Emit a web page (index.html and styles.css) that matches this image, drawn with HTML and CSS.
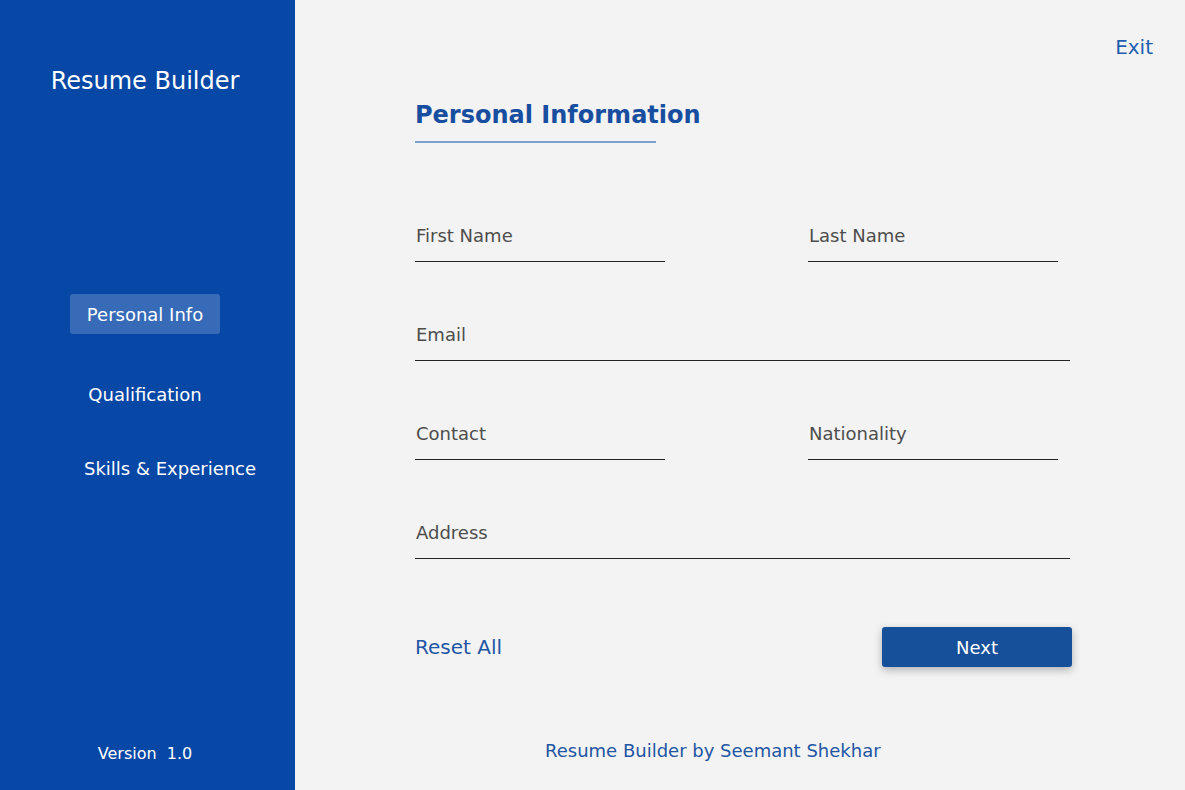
FILE: index.html
```html
<!DOCTYPE html>
<html lang="en">
<head>
<meta charset="utf-8">
<title>Resume Builder</title>
<link rel="stylesheet" href="styles.css">
</head>
<body>
<div class="app">
  <aside class="sidebar">
    <div class="brand">Resume Builder</div>
    <nav class="nav">
      <a class="nav-item nav-item--active">Personal Info</a>
      <a class="nav-item">Qualification</a>
      <a class="nav-item nav-item--wide">Skills &amp; Experience</a>
    </nav>
    <div class="version">Version&nbsp; 1.0</div>
  </aside>
  <main class="main">
    <div class="topbar"><a class="exit">Exit</a></div>
    <section class="content">
      <h1 class="heading">Personal Information</h1>
      <div class="heading-rule"></div>
      <form class="form">
        <div class="row">
          <input class="field" type="text" placeholder="First Name">
          <input class="field" type="text" placeholder="Last Name">
        </div>
        <div class="row">
          <input class="field field--full" type="text" placeholder="Email">
        </div>
        <div class="row">
          <input class="field" type="text" placeholder="Contact">
          <input class="field" type="text" placeholder="Nationality">
        </div>
        <div class="row">
          <input class="field field--full" type="text" placeholder="Address">
        </div>
        <div class="actions">
          <button type="button" class="reset">Reset All</button>
          <button type="button" class="next">Next</button>
        </div>
      </form>
    </section>
    <footer class="footer">Resume Builder by Seemant Shekhar</footer>
  </main>
</div>
</body>
</html>
```

FILE: styles.css
```css
* { box-sizing: border-box; }

html, body {
  margin: 0;
  padding: 0;
  height: 100%;
}

body {
  font-family: "DejaVu Sans", "Liberation Sans", sans-serif;
  background: #f3f3f3;
}

.app {
  display: flex;
  width: 1185px;
  height: 790px;
}

.sidebar {
  width: 295px;
  flex: none;
  background: #0747a6;
  color: #ffffff;
  display: flex;
  flex-direction: column;
}

.brand {
  margin-top: 67px;
  font-size: 24px;
  line-height: 28px;
  text-align: center;
  padding-right: 5px;
}

.nav {
  margin-top: 199px;
  display: flex;
  flex-direction: column;
  gap: 40px;
}

.nav-item {
  display: block;
  margin-left: 70px;
  width: 150px;
  height: 40px;
  line-height: 41px;
  font-size: 18px;
  text-align: center;
  border-radius: 3px;
  color: #ffffff;
  cursor: pointer;
}

.nav-item--active {
  background: rgba(255, 255, 255, 0.2);
}

.nav-item--wide {
  margin-top: -6px;
  margin-left: 84px;
  width: auto;
  text-align: left;
}

.version {
  margin-top: auto;
  padding-bottom: 26px;
  font-size: 16px;
  line-height: 20px;
  text-align: center;
  padding-right: 5px;
}

.main {
  flex: 1;
  display: flex;
  flex-direction: column;
}

.topbar {
  display: flex;
  justify-content: flex-end;
  padding: 35px 32px 0 0;
}

.exit {
  font-size: 20px;
  line-height: 24px;
  color: #1f5fb0;
  cursor: pointer;
}

.content {
  padding-left: 120px;
}

.heading {
  margin: 42px 0 0 0;
  font-size: 24px;
  line-height: 28px;
  font-weight: bold;
  color: #174ea0;
}

.heading-rule {
  margin-top: 12px;
  width: 241px;
  height: 2px;
  background: #7c9fd2;
}

.form {
  margin-top: 82px;
  display: flex;
  flex-direction: column;
  gap: 62px;
}

.row {
  display: flex;
  gap: 143px;
}

.field {
  width: 250px;
  height: 37px;
  margin: 0;
  padding: 0 0 16px 1px;
  border: none;
  border-bottom: 1px solid #222222;
  background: transparent;
  font-family: "DejaVu Sans", "Liberation Sans", sans-serif;
  font-size: 18px;
  line-height: 20px;
  color: #333333;
  outline: none;
}

.field::placeholder {
  color: #4d4d4d;
  opacity: 1;
}

.field--full {
  width: 655px;
}

.actions {
  margin-top: 6px;
  width: 657px;
  display: flex;
  justify-content: space-between;
  align-items: center;
}

.reset {
  border: none;
  background: none;
  padding: 0;
  font-family: "DejaVu Sans", "Liberation Sans", sans-serif;
  font-size: 20px;
  line-height: 24px;
  color: #1f56a5;
  cursor: pointer;
}

.next {
  width: 190px;
  height: 40px;
  border: none;
  border-radius: 3px;
  background: #17509a;
  color: #ffffff;
  font-family: "DejaVu Sans", "Liberation Sans", sans-serif;
  font-size: 18px;
  box-shadow: 0 3px 8px rgba(0, 0, 0, 0.28);
  cursor: pointer;
}

.footer {
  margin-top: auto;
  margin-left: 250px;
  padding-bottom: 28px;
  font-size: 18px;
  line-height: 22px;
  color: #2255a4;
}
```
